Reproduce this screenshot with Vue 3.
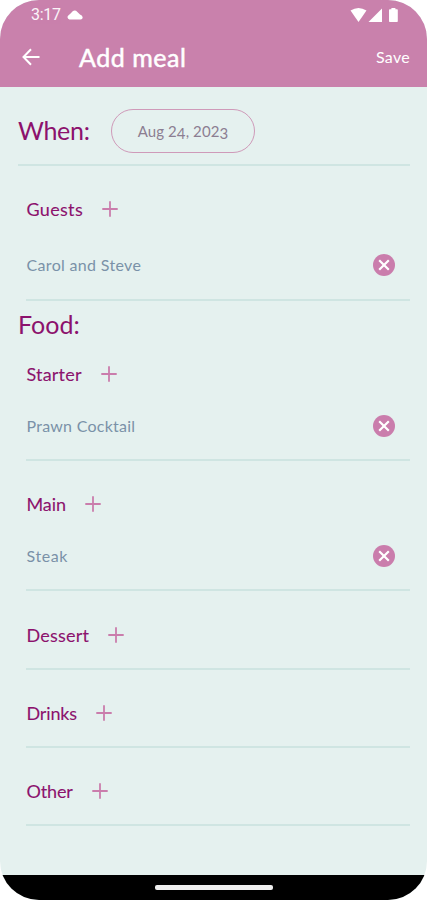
<script setup>
const guests = { id: 'guests', name: 'Guests', items: ['Carol and Steve'] }
const courses = [
  { id: 'starter', name: 'Starter', items: ['Prawn Cocktail'] },
  { id: 'main', name: 'Main', items: ['Steak'] },
  { id: 'dessert', name: 'Dessert', items: [] },
  { id: 'drinks', name: 'Drinks', items: [] },
  { id: 'other', name: 'Other', items: [] },
]
</script>

<template>
  <div class="phone">
    <header>
      <div class="status">
        <span class="time">3:17</span>
        <svg class="cloud" width="16" height="10" viewBox="0 0 16 10"><path d="M2.4 9.4A2.3 2.3 0 0 1 1.6 5.2Q4.2 3.4 5.4 1.6Q8-.6 10.4 2L13 4.6Q15.7 5.8 15.7 7.4Q15.5 9.4 13.6 9.4z" fill="#fff" /></svg>
        <svg class="signals" width="50" height="16" viewBox="0 0 50 16" fill="#fff">
          <path d="M1.5 3.6Q9.5-1.4 17.5 3.6L9.5 15z" />
          <path d="M19.5 15L33 1.5V15z" />
          <path d="M40.8 2.2h1.6V1h4v1.2H48q.8 0 .8.8v11.2q0 .8-.8.8h-7.2q-.8 0-.8-.8V3q0-.8.8-.8z" />
        </svg>
      </div>
      <div class="bar">
        <svg width="18" height="18" viewBox="0 0 18 18" fill="none" stroke="#fff" stroke-width="2"><path d="M17.5 9H1.8M9 1.3L1.5 9L9 16.7" /></svg>
        <h1>Add meal</h1>
        <span class="save">Save</span>
      </div>
    </header>
    <main>
      <section class="when">
        <h2 class="when-title">When:</h2>
        <button class="date">Aug 2<span class="low">4</span>, 202<span class="low">3</span></button>
      </section>
      <section class="group" :class="guests.id">
        <div class="head"><h3>{{ guests.name }}</h3><svg class="plus" width="16" height="16" viewBox="0 0 16 16"><path d="M8 .3v15.4M.3 8h15.4" /></svg></div>
        <div v-for="item in guests.items" :key="item" class="item">
          <span>{{ item }}</span>
          <svg class="remove" width="22" height="22" viewBox="0 0 22 22"><circle cx="11" cy="11" r="11" /><path d="M6.2 6.2l9.6 9.6M15.8 6.2l-9.6 9.6" /></svg>
        </div>
      </section>
      <h2 class="food">Food:</h2>
      <section v-for="c in courses" :key="c.id" class="group" :class="c.id">
        <div class="head"><h3>{{ c.name }}</h3><svg class="plus" width="16" height="16" viewBox="0 0 16 16"><path d="M8 .3v15.4M.3 8h15.4" /></svg></div>
        <div v-for="item in c.items" :key="item" class="item">
          <span>{{ item }}</span>
          <svg class="remove" width="22" height="22" viewBox="0 0 22 22"><circle cx="11" cy="11" r="11" /><path d="M6.2 6.2l9.6 9.6M15.8 6.2l-9.6 9.6" /></svg>
        </div>
      </section>
    </main>
    <footer><i></i></footer>
  </div>
</template>

<style>
body { background: #fff; }
</style>

<style scoped>
* { box-sizing: border-box; }
.phone { width: 427px; height: 900px; display: flex; flex-direction: column; overflow: hidden; border-radius: 39px; background: #e5f1ef; font-family: Lato, sans-serif; }
header { height: 87px; background: #c981ac; color: #fff; }
.status { height: 29px; display: flex; align-items: center; padding: 0 28px 0 31px; }
.time { font: 16px/29px Roboto, sans-serif; width: 36px; letter-spacing: -.3px; opacity: .92; }
.signals { margin-left: auto; }
.bar { height: 56px; display: flex; align-items: center; padding: 0 17px 0 22px; }
h1, h2, h3 { margin: 0; font-weight: 400; white-space: nowrap; }
h1 { margin-left: 39px; padding-bottom: 1px; font-size: 25px; letter-spacing: .55px; -webkit-text-stroke: .5px #fff; }
.save { margin-left: auto; padding-bottom: 2px; font-size: 16px; letter-spacing: .3px; }
main { flex: 1; padding: 0 17px 0 18px; }
h2 { padding-bottom: 2px; font-size: 25px; line-height: 28px; color: #8c126d; }
.when { height: 79px; display: flex; align-items: center; padding-top: 10px; border-bottom: 2px solid #cfe5e2; }
.when-title { width: 93px; letter-spacing: -.3px; }
.date { width: 144px; height: 44px; padding: 0; border: 1px solid #cf9ab9; border-radius: 22px; background: none; color: #8c7e92; font: 15px/42px Lato, sans-serif; text-align: center; letter-spacing: .1px; }
.low { vertical-align: -2px; line-height: 1; }
.group { margin-left: 8px; border-bottom: 2px solid #cfe5e2; color: #7a91a8; }
.head { height: 36px; display: flex; align-items: center; gap: 19px; }
h3 { padding-left: .5px; font-size: 18px; line-height: 24px; color: #8c126d; -webkit-text-stroke: .1px #8c126d; }
.plus { fill: none; stroke: #ca7dac; stroke-width: 1.8; }
.item { height: 36px; display: flex; align-items: center; justify-content: space-between; padding: 0 15px 0 .5px; font-size: 16px; letter-spacing: .25px; }
.item span { padding-bottom: 2px; }
.remove { fill: #ca7dac; }
.remove path { stroke: #fff; stroke-width: 2.2; }
.guests { height: 135px; padding-top: 25px; }
.guests h3 { letter-spacing: .32px; }
.guests .item { margin-top: 20px; letter-spacing: .33px; }
.food { height: 30px; margin-top: 9px; }
.starter { height: 121px; padding-top: 16px; }
.starter h3 { letter-spacing: .2px; }
.starter .item, .main .item { margin-top: 16px; }
.main { height: 130px; padding-top: 25px; }
.main .item { letter-spacing: .6px; }
.main h3 { letter-spacing: -.1px; }
.dessert { height: 79px; padding-top: 26px; }
.dessert h3 { letter-spacing: .2px; }
.drinks, .other { height: 78px; padding-top: 25px; }
.drinks h3, .other h3 { letter-spacing: -.15px; }
footer { height: 25px; display: flex; align-items: center; justify-content: center; background: #000; }
footer i { width: 118px; height: 5px; border-radius: 2px; background: #eee; }
</style>
